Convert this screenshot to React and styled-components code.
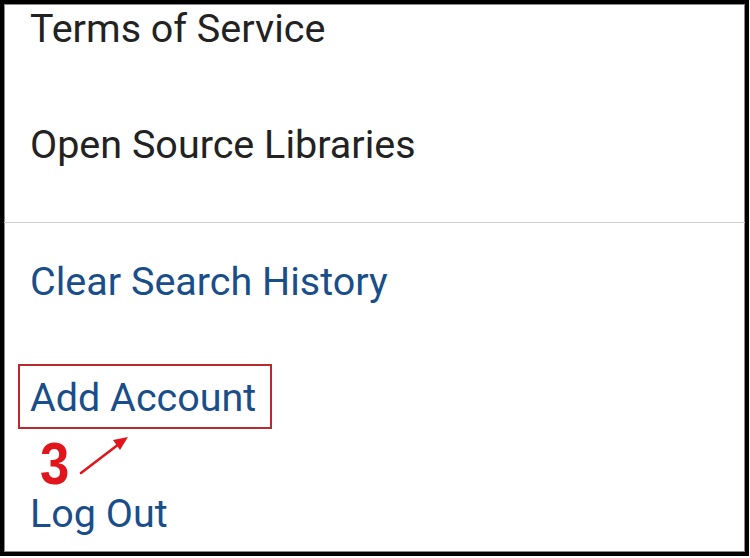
import React from "react";
import styled, { createGlobalStyle } from "styled-components";

const Global = createGlobalStyle`
  html, body {
    margin: 0;
    padding: 0;
    background: #ffffff;
  }
  body {
    font-family: Roboto, "Liberation Sans", Arial, sans-serif;
  }
`;

const Frame = styled.div`
  width: 749px;
  height: 556px;
  box-sizing: border-box;
  border: 4px solid #000;
  box-shadow: inset 0 0 0 1px #8a8a8a;
  background: #fff;
  overflow: hidden;
`;

const Scroller = styled.div`
  margin-top: -33px;
`;

const Section = styled.div`
  padding: ${(p) => p.$pad || "0"};
`;

const Divider = styled.div`
  height: 1px;
  background: #cfcfcf;
`;

const Item = styled.div`
  position: relative;
  height: 116px;
  line-height: 116px;
  padding-left: 26px;
  font-size: 39.5px;
  color: ${(p) => (p.$link ? "#1a4e8a" : "#222222")};
  white-space: nowrap;
`;

const Highlight = styled.div`
  position: absolute;
  left: 14px;
  top: 24px;
  width: 254px;
  height: 65px;
  box-sizing: border-box;
  border: 2.5px solid #b92a30;
  pointer-events: none;
`;

const StepNumber = styled.div`
  position: absolute;
  left: 36px;
  top: 102px;
  font-family: "Liberation Sans", Arial, sans-serif;
  font-weight: 700;
  font-size: 60px;
  line-height: 44px;
  color: #e0161c;
  transform: scaleX(0.88);
  transform-origin: left center;
  z-index: 2;
`;

const Arrow = styled.svg`
  position: absolute;
  left: 72px;
  top: 92px;
  z-index: 2;
`;

export default function App() {
  return (
    <>
      <Global />
      <Frame>
        <Scroller>
          <Section $pad="0 0 19px">
            <Item>Terms of Service</Item>
            <Item>Open Source Libraries</Item>
          </Section>
          <Divider />
          <Section $pad="1px 0 0">
            <Item $link>Clear Search History</Item>
            <Item $link>
              Add Account
              <Highlight />
              <StepNumber>3</StepNumber>
              <Arrow width="60" height="46" viewBox="0 0 60 46">
                <line x1="5" y1="41" x2="43" y2="12" stroke="#e0161c" strokeWidth="2.6" strokeLinecap="round" />
                <polygon points="52,5 37,8 44,18" fill="#e0161c" />
              </Arrow>
            </Item>
            <Item $link>Log Out</Item>
          </Section>
        </Scroller>
      </Frame>
    </>
  );
}
